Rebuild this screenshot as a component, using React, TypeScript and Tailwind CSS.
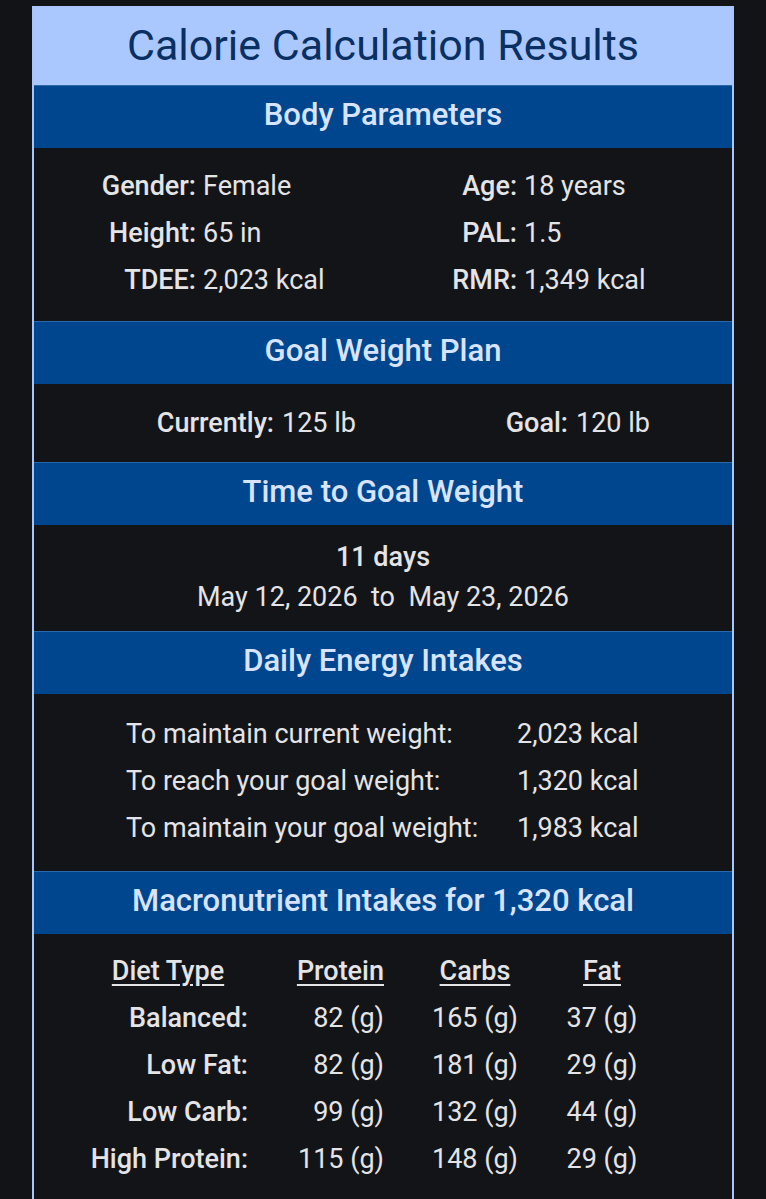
const bodyParams = [
  ["Gender:", "Female", "Age:", "18 years"],
  ["Height:", "65 in", "PAL:", "1.5"],
  ["TDEE:", "2,023 kcal", "RMR:", "1,349 kcal"],
];

const intakes = [
  ["To maintain current weight:", "2,023 kcal"],
  ["To reach your goal weight:", "1,320 kcal"],
  ["To maintain your goal weight:", "1,983 kcal"],
];

const macros = [
  ["Balanced:", "82 (g)", "165 (g)", "37 (g)"],
  ["Low Fat:", "82 (g)", "181 (g)", "29 (g)"],
  ["Low Carb:", "99 (g)", "132 (g)", "44 (g)"],
  ["High Protein:", "115 (g)", "148 (g)", "29 (g)"],
];

function SectionHeader({ children }: { children: React.ReactNode }) {
  return (
    <div className="flex h-[63px] items-center justify-center border-t border-[#2a68ad] bg-[#00468f] pb-[4px] text-[31px] font-medium text-[#d8e3ff]">
      {children}
    </div>
  );
}

export default function App() {
  return (
    <div
      className="min-h-screen bg-[#121316] pt-[6px] text-[#e4e4e6]"
      style={{ fontFamily: 'Roboto, "Noto Sans", sans-serif' }}
    >
      <div className="mx-[32px] border-2 border-b-0 border-[#a9c6fb] bg-[#131418]">
        <div className="flex h-[77px] items-center justify-center bg-[#abc8fe] pb-[2px] text-[43px] text-[#0a2f62]">
          Calorie Calculation Results
        </div>

        <SectionHeader>Body Parameters</SectionHeader>
        <div className="pt-[15px] pb-[17px] text-[27px]">
          {bodyParams.map(([l1, v1, l2, v2]) => (
            <div key={l1} className="grid h-[47px] grid-cols-[162px_204px_117px_1fr] items-center">
              <span className="text-right font-medium">{l1}</span>
              <span className="pl-[7px]">{v1}</span>
              <span className="text-right font-medium">{l2}</span>
              <span className="pl-[7px]">{v2}</span>
            </div>
          ))}
        </div>

        <SectionHeader>Goal Weight Plan</SectionHeader>
        <div className="grid h-[78px] grid-cols-[240px_166px_128px_1fr] items-center text-[27px]">
          <span className="text-right font-medium">Currently:</span>
          <span className="pl-[8px]">125 lb</span>
          <span className="text-right font-medium">Goal:</span>
          <span className="pl-[8px]">120 lb</span>
        </div>

        <SectionHeader>Time to Goal Weight</SectionHeader>
        <div className="flex flex-col items-center pt-[12px] pb-[14px] text-[27px]">
          <div className="flex h-[40px] items-center font-medium">11 days</div>
          <div className="flex h-[40px] items-center whitespace-pre">May 12, 2026  to  May 23, 2026</div>
        </div>

        <SectionHeader>Daily Energy Intakes</SectionHeader>
        <div className="pt-[17px] pb-[19px] pl-[92px] text-[27px]">
          {intakes.map(([label, value]) => (
            <div key={label} className="grid h-[47px] grid-cols-[391px_1fr] items-center">
              <span>{label}</span>
              <span>{value}</span>
            </div>
          ))}
        </div>

        <SectionHeader>Macronutrient Intakes for 1,320 kcal</SectionHeader>
        <div className="pt-[14px] pb-[20px] pl-[54px] text-[27px]">
          <div className="grid h-[47px] grid-cols-[160px_136px_182px_72px] items-center font-medium">
            <span className="text-center underline underline-offset-[4px]">Diet Type</span>
            <span className="text-right underline underline-offset-[4px]">Protein</span>
            <span className="text-center underline underline-offset-[4px]">Carbs</span>
            <span className="text-center underline underline-offset-[4px]">Fat</span>
          </div>
          {macros.map(([diet, protein, carbs, fat]) => (
            <div key={diet} className="grid h-[47px] grid-cols-[160px_136px_182px_72px] items-center">
              <span className="text-right font-medium">{diet}</span>
              <span className="text-right">{protein}</span>
              <span className="text-center">{carbs}</span>
              <span className="text-center">{fat}</span>
            </div>
          ))}
        </div>
      </div>
    </div>
  );
}
